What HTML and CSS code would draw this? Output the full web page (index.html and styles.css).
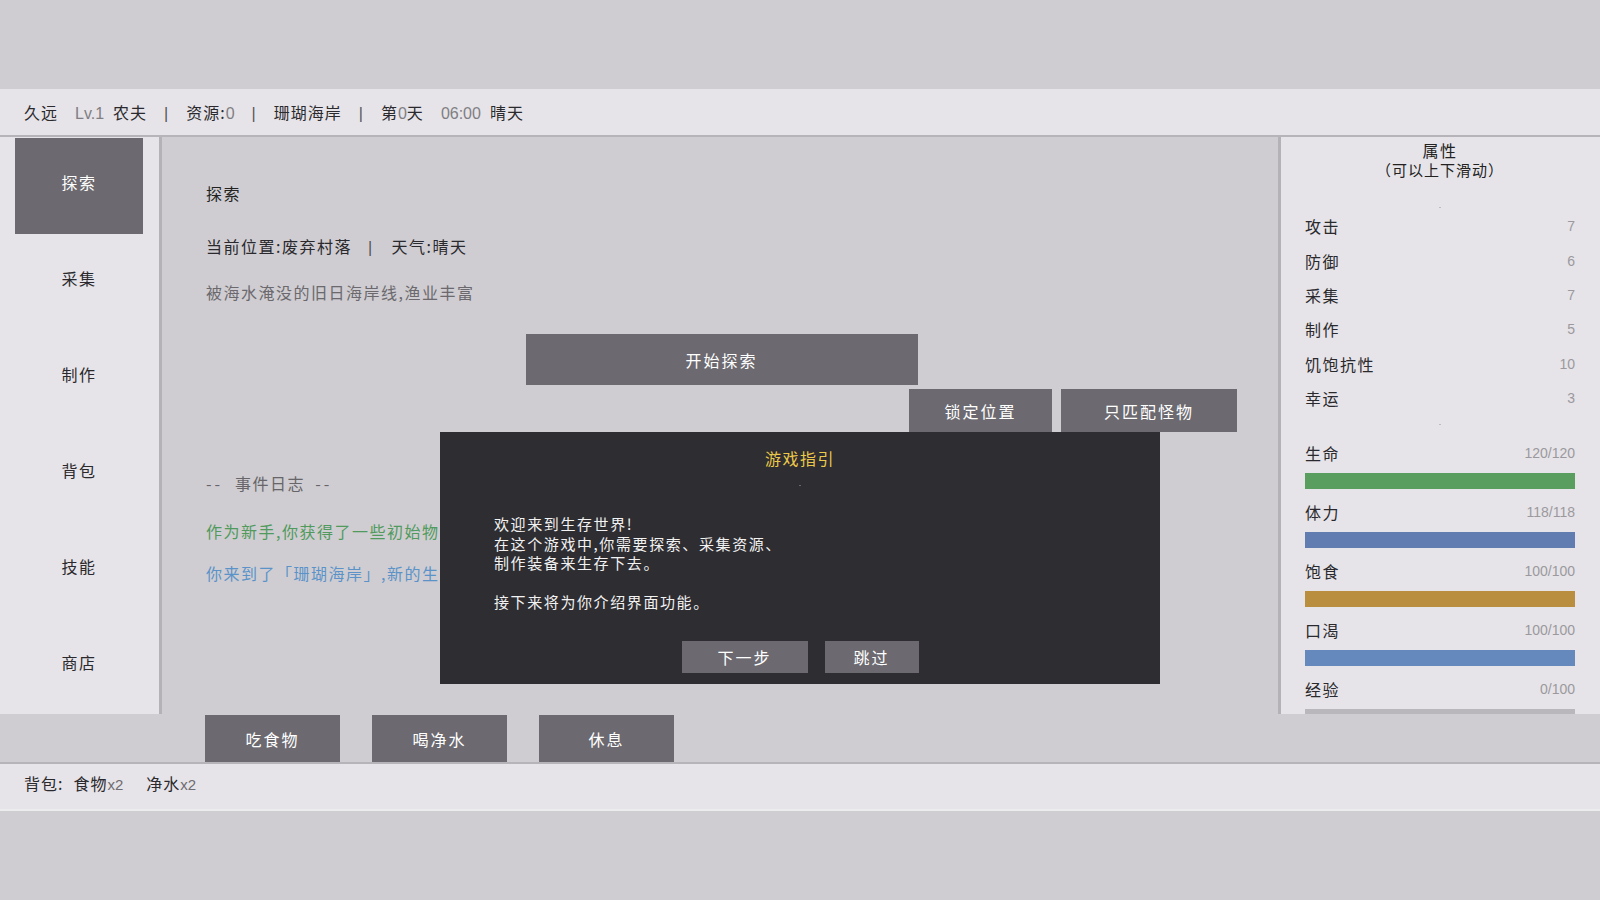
FILE: index.html
```html
<!DOCTYPE html>
<html lang="zh-CN">
<head>
<meta charset="utf-8">
<title>生存世界</title>
<link rel="stylesheet" href="styles.css">
</head>
<body>
<div class="app">
  <header class="topbar">
    <span>久远</span>
    <span class="grp"><span class="num">Lv.1</span><span>农夫</span></span>
    <span class="sep">|</span>
    <span>资源:<span class="num">0</span></span>
    <span class="sep">|</span>
    <span>珊瑚海岸</span>
    <span class="sep">|</span>
    <span>第<span class="num">0</span>天</span>
    <span class="grp"><span class="num">06:00</span><span>晴天</span></span>
  </header>

  <div class="workspace">
    <nav class="sidebar">
      <div class="nav-item active">探索</div>
      <div class="nav-item">采集</div>
      <div class="nav-item">制作</div>
      <div class="nav-item">背包</div>
      <div class="nav-item">技能</div>
      <div class="nav-item">商店</div>
    </nav>

    <main class="content">
      <h2 class="section-title">探索</h2>
      <p class="location">当前位置:废弃村落<span class="loc-sep">|</span>天气:晴天</p>
      <p class="desc">被海水淹没的旧日海岸线,渔业丰富</p>
      <div class="explore-row">
        <button class="btn btn-explore">开始探索</button>
      </div>
      <div class="option-row">
        <button class="btn btn-opt">锁定位置</button>
        <button class="btn btn-opt wide">只匹配怪物</button>
      </div>
      <div class="log-title"><span class="dash">--</span>事件日志<span class="dash">--</span></div>
      <p class="log log-green">作为新手,你获得了一些初始物资。</p>
      <p class="log log-blue">你来到了「珊瑚海岸」,新的生存开始了。</p>
    </main>

    <aside class="panel">
      <div class="panel-title">属性</div>
      <div class="panel-sub">（可以上下滑动）</div>
      <div class="dot first"></div>
      <div class="attr"><span>攻击</span><span class="val">7</span></div>
      <div class="attr"><span>防御</span><span class="val">6</span></div>
      <div class="attr"><span>采集</span><span class="val">7</span></div>
      <div class="attr"><span>制作</span><span class="val">5</span></div>
      <div class="attr"><span>饥饱抗性</span><span class="val">10</span></div>
      <div class="attr"><span>幸运</span><span class="val">3</span></div>
      <div class="dot second"></div>
      <div class="stats">
        <div class="stat">
          <div class="stat-label"><span>生命</span><span class="val">120/120</span></div>
          <div class="bar"><div class="fill hp" style="width:100%"></div></div>
        </div>
        <div class="stat">
          <div class="stat-label"><span>体力</span><span class="val">118/118</span></div>
          <div class="bar"><div class="fill sp" style="width:100%"></div></div>
        </div>
        <div class="stat">
          <div class="stat-label"><span>饱食</span><span class="val">100/100</span></div>
          <div class="bar"><div class="fill food" style="width:100%"></div></div>
        </div>
        <div class="stat">
          <div class="stat-label"><span>口渴</span><span class="val">100/100</span></div>
          <div class="bar"><div class="fill water" style="width:100%"></div></div>
        </div>
        <div class="stat">
          <div class="stat-label"><span>经验</span><span class="val">0/100</span></div>
          <div class="bar"><div class="fill exp" style="width:0%"></div></div>
        </div>
      </div>
    </aside>
  </div>

  <div class="actions">
    <button class="btn btn-action">吃食物</button>
    <button class="btn btn-action">喝净水</button>
    <button class="btn btn-action">休息</button>
  </div>

  <footer class="bagbar">
    <span>背包:</span>
    <span class="bag-item">食物<span class="num">x2</span></span>
    <span class="bag-item">净水<span class="num">x2</span></span>
  </footer>

  <div class="guide">
    <div class="guide-title">游戏指引</div>
    <div class="guide-dot"></div>
    <div class="guide-body">
      <div class="guide-line">欢迎来到生存世界!</div>
      <div class="guide-line">在这个游戏中,你需要探索、采集资源、</div>
      <div class="guide-line">制作装备来生存下去。</div>
      <div class="guide-line gap">接下来将为你介绍界面功能。</div>
    </div>
    <div class="guide-actions">
      <button class="btn btn-guide">下一步</button>
      <button class="btn btn-guide small">跳过</button>
    </div>
  </div>
</div>
</body>
</html>
```

FILE: styles.css
```css
* {
  box-sizing: border-box;
}

html, body {
  margin: 0;
  padding: 0;
  background: #cfcdd1;
}

body {
  width: 1600px;
  height: 900px;
  overflow: hidden;
  font-family: "Noto Sans CJK SC", "Noto Sans", sans-serif;
  font-size: 16px;
  color: #2a292d;
  letter-spacing: 1.5px;
}

.app {
  position: relative;
  padding-top: 89px;
}

.num {
  font-family: "Liberation Sans", sans-serif;
  color: #807e83;
  letter-spacing: 0;
}

/* top status bar */
.topbar {
  height: 48px;
  background: #e6e4e8;
  border-bottom: 2px solid #b6b4b8;
  display: flex;
  align-items: baseline;
  gap: 17px;
  padding: 11px 0 0 24px;
  letter-spacing: 1px;
}

.topbar .grp {
  display: flex;
  align-items: baseline;
  gap: 9px;
}

.topbar .sep {
  color: #555;
  font-family: "Liberation Sans", sans-serif;
}

/* three-column work area */
.workspace {
  display: flex;
  height: 577px;
}

.sidebar {
  width: 162px;
  background: #e6e4e8;
  border-right: 3px solid #b4b2b6;
  padding-top: 1px;
}

.nav-item {
  width: 128px;
  height: 96px;
  margin-left: 15px;
  padding-bottom: 8px;
  display: flex;
  align-items: center;
  justify-content: center;
  color: #2a292d;
}

.nav-item.active {
  background: #6c6a70;
  color: #fff;
}

.content {
  flex: 1;
  padding: 44px 41px 0 44px;
}

.content p,
.content h2 {
  margin: 0;
}

.section-title {
  font-size: 16px;
  font-weight: normal;
  line-height: 24px;
  color: #222;
}

.location {
  margin-top: 29px !important;
  line-height: 24px;
  color: #2a292d;
}

.loc-sep {
  margin: 0 18px 0 16px;
  font-family: "Liberation Sans", sans-serif;
  color: #555;
}

.desc {
  margin-top: 20px !important;
  line-height: 24px;
  color: #6b696e;
}

.btn {
  border: none;
  background: #6c6a70;
  color: #fff;
  font-family: "Noto Sans CJK SC", "Noto Sans", sans-serif;
  font-size: 16px;
  letter-spacing: 2px;
  padding: 0;
  cursor: pointer;
}

.explore-row {
  margin-top: 30px;
  display: flex;
  justify-content: center;
}

.btn-explore {
  width: 392px;
  height: 51px;
}

.option-row {
  margin-top: 4px;
  display: flex;
  justify-content: flex-end;
  gap: 9px;
}

.btn-opt {
  width: 143px;
  height: 43px;
}

.btn-opt.wide {
  width: 176px;
}

.log-title {
  margin-top: 39px;
  line-height: 24px;
  color: #67656a;
}

.log-title .dash {
  letter-spacing: 3px;
}

.log-title .dash:first-child {
  margin-right: 12px;
}

.log-title .dash:last-child {
  margin-left: 10px;
}

.log {
  line-height: 24px;
}

.log-green {
  margin-top: 24px !important;
  color: #4f9a5c;
}

.log-blue {
  margin-top: 18px !important;
  color: #5b93c9;
}

/* attribute panel */
.panel {
  width: 322px;
  background: #e6e4e8;
  border-left: 3px solid #b4b2b6;
  padding: 3px 25px 0 24px;
  overflow: hidden;
}

.panel-title,
.panel-sub {
  text-align: center;
  line-height: 20px;
  color: #222;
}

.panel-sub {
  font-size: 15px;
  letter-spacing: 1px;
}

.dot {
  width: 2px;
  height: 1px;
  background: #bdbbc0;
  margin: 0 auto;
}

.dot.first {
  margin-top: 27px;
  margin-bottom: 1px;
}

.dot.second {
  margin-top: 9px;
}

.attr {
  height: 34.4px;
  display: flex;
  align-items: center;
  justify-content: space-between;
}

.val {
  font-family: "Liberation Sans", sans-serif;
  font-size: 14px;
  letter-spacing: 0;
  color: #9b999e;
}

.stats {
  margin-top: 7px;
}

.stat {
  margin-bottom: 2px;
}

.stat-label {
  height: 41px;
  display: flex;
  align-items: center;
  justify-content: space-between;
}

.bar {
  height: 16px;
  background: #b9b7bb;
}

.fill {
  height: 100%;
}

.fill.hp { background: #5a9e5f; }
.fill.sp { background: #607cb1; }
.fill.food { background: #b98f3f; }
.fill.water { background: #6689bd; }
.fill.exp { background: #5a9e5f; }

/* quick actions under the main column */
.actions {
  height: 48px;
  padding: 1px 0 0 205px;
  display: flex;
  gap: 32px;
}

.btn-action {
  width: 135px;
  height: 47px;
}

/* bag summary bar */
.bagbar {
  height: 49px;
  background: #e6e4e8;
  border-top: 2px solid #b6b4b8;
  border-bottom: 2px solid #ececef;
  display: flex;
  align-items: center;
  padding: 0 0 7px 24px;
  gap: 10px;
  letter-spacing: 1px;
}

.bagbar .bag-item {
  margin-right: 13px;
}

.bagbar .num {
  color: #6e6c71;
  font-size: 15px;
}

/* tutorial dialog */
.guide {
  position: absolute;
  left: 440px;
  top: 432px;
  width: 720px;
  height: 252px;
  background: #2e2d31;
  color: #f2f2f2;
}

.guide-title {
  margin-top: 16px;
  text-align: center;
  line-height: 20px;
  color: #ecc94a;
}

.guide-dot {
  width: 2px;
  height: 1px;
  background: #6a686e;
  margin: 17px auto 0;
}

.guide-body {
  margin: 28px 0 0 54px;
  font-size: 15px;
  letter-spacing: 1.6px;
  height: 97px;
}

.guide-line {
  height: 19.5px;
  line-height: 19px;
  overflow: visible;
}

.guide-line.gap {
  margin-top: 19.5px;
}

.guide-actions {
  margin-top: 30px;
  display: flex;
  justify-content: center;
  gap: 17px;
}

.btn-guide {
  width: 126px;
  height: 32px;
}

.btn-guide.small {
  width: 94px;
}
```
